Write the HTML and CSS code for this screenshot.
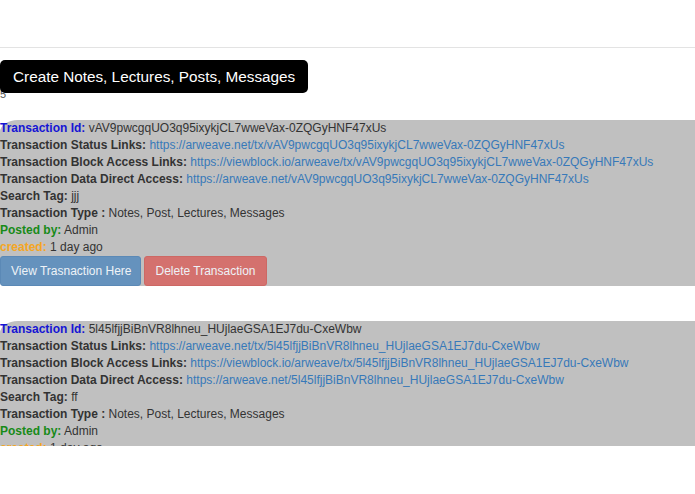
FILE: index.html
```html
<!DOCTYPE html>
<html lang="en">

<head>
    <meta charset="UTF-8">
    <meta name="viewport" content="width=device-width, initial-scale=1.0">
    <title>transactions</title>
    <link rel="stylesheet" href="styles.css">
</head>

<body>
    <nav class="navbar"></nav>

    <div class="create-row">
        <button class="create-btn">Create Notes, Lectures, Posts, Messages</button>
        <div class="count">5</div>
    </div>

    <div class="list">
        <div class="card">
            <div class="line"><b class="id-label">Transaction Id:</b> vAV9pwcgqUO3q95ixykjCL7wweVax-0ZQGyHNF47xUs</div>
            <div class="line"><b>Transaction Status Links:</b> <a href="#">https://arweave.net/tx/vAV9pwcgqUO3q95ixykjCL7wweVax-0ZQGyHNF47xUs</a></div>
            <div class="line"><b>Transaction Block Access Links:</b> <a href="#">https://viewblock.io/arweave/tx/vAV9pwcgqUO3q95ixykjCL7wweVax-0ZQGyHNF47xUs</a></div>
            <div class="line"><b>Transaction Data Direct Access:</b> <a href="#">https://arweave.net/vAV9pwcgqUO3q95ixykjCL7wweVax-0ZQGyHNF47xUs</a></div>
            <div class="line"><b>Search Tag:</b> jjj</div>
            <div class="line"><b>Transaction Type :</b> Notes, Post, Lectures, Messages</div>
            <div class="line"><b class="posted">Posted by:</b> Admin</div>
            <div class="line"><b class="created">created:</b> 1 day ago</div>
            <div class="actions">
                <button class="btn btn-view">View Trasnaction Here</button>
                <button class="btn btn-delete">Delete Transaction</button>
            </div>
        </div>

        <div class="card">
            <div class="line"><b class="id-label">Transaction Id:</b> 5l45lfjjBiBnVR8lhneu_HUjlaeGSA1EJ7du-CxeWbw</div>
            <div class="line"><b>Transaction Status Links:</b> <a href="#">https://arweave.net/tx/5l45lfjjBiBnVR8lhneu_HUjlaeGSA1EJ7du-CxeWbw</a></div>
            <div class="line"><b>Transaction Block Access Links:</b> <a href="#">https://viewblock.io/arweave/tx/5l45lfjjBiBnVR8lhneu_HUjlaeGSA1EJ7du-CxeWbw</a></div>
            <div class="line"><b>Transaction Data Direct Access:</b> <a href="#">https://arweave.net/5l45lfjjBiBnVR8lhneu_HUjlaeGSA1EJ7du-CxeWbw</a></div>
            <div class="line"><b>Search Tag:</b> ff</div>
            <div class="line"><b>Transaction Type :</b> Notes, Post, Lectures, Messages</div>
            <div class="line"><b class="posted">Posted by:</b> Admin</div>
            <div class="line"><b class="created">created:</b> 1 day ago</div>
            <div class="actions">
                <button class="btn btn-view">View Trasnaction Here</button>
                <button class="btn btn-delete">Delete Transaction</button>
            </div>
        </div>
    </div>
</body>

</html>
```

FILE: styles.css
```css
*,
*::after,
*::before {
    margin: 0;
    padding: 0;
    box-sizing: border-box;
}

body {
    font-family: "Liberation Sans", Arial, sans-serif;
    font-size: 12px;
    line-height: 1.42857;
    color: #333;
    background-color: #fff;
    overflow: hidden;
}

.navbar {
    height: 48px;
    border-bottom: 1px solid #e3e3e3;
}

.create-row {
    padding-top: 12px;
}

.create-btn {
    position: relative;
    z-index: 1;
    display: block;
    background-color: #000;
    color: #fff;
    font-family: "Liberation Sans", Arial, sans-serif;
    font-size: 15.3px;
    line-height: 21px;
    padding: 6px 13px;
    white-space: nowrap;
    border: none;
    border-radius: 5px;
    text-align: left;
}

.count {
    margin-top: -5px;
    height: 12px;
    line-height: 12px;
    font-size: 11px;
    color: #555;
}

.list {
    margin-top: 20px;
    height: 326px;
    overflow: hidden;
}

.card {
    background-color: #c0c0c0;
    border-radius: 18px 0 0 12px / 12px 0 0 12px;
    margin-bottom: 35px;
    white-space: nowrap;
}

.line {
    height: 17px;
}

.line b {
    font-weight: bold;
}

.id-label {
    color: #1515d4;
}

.posted {
    color: #188a18;
}

.created {
    color: #f5a623;
}

.line a {
    color: #3779b9;
    text-decoration: none;
}

.actions {
    display: flex;
    gap: 3px;
}

.btn {
    font-family: "Liberation Sans", Arial, sans-serif;
    font-size: 12px;
    line-height: 18px;
    padding: 5px 10px;
    border: 1px solid transparent;
    border-radius: 3px;
    color: #eef2f7;
}

.btn-view {
    background-color: #6592bd;
    border-color: #5b89b6;
    width: 141px;
}

.btn-delete {
    background-color: #d4716e;
    border-color: #cd6864;
    width: 123px;
}
```
